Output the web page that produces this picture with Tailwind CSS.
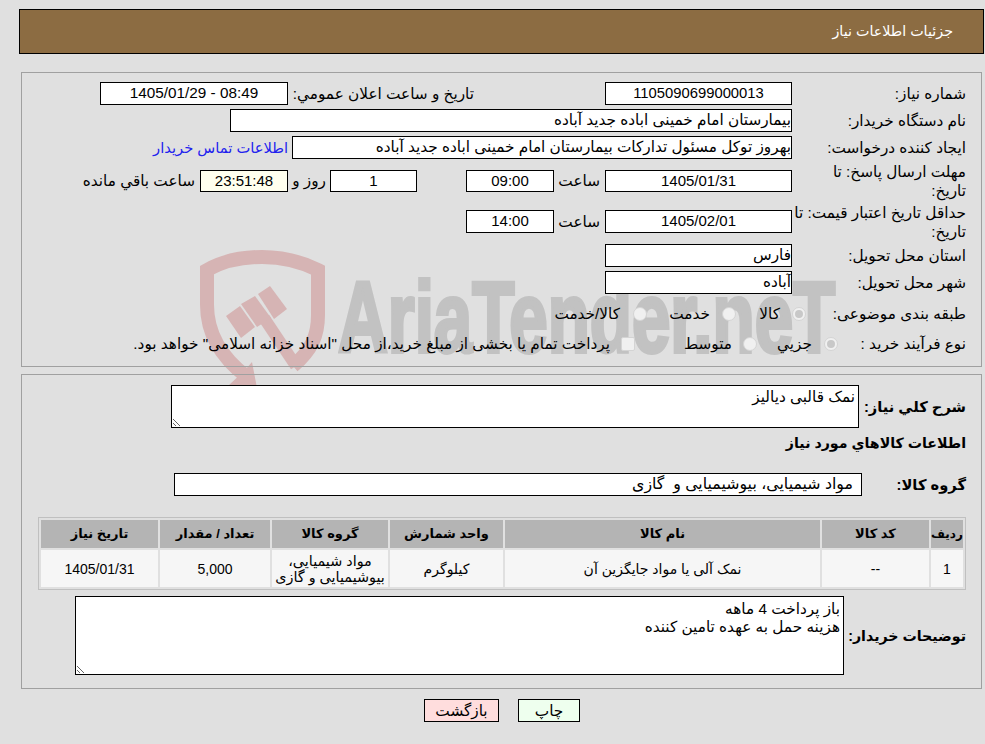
<!DOCTYPE html>
<html lang="fa" dir="rtl">
<head>
    <meta charset="UTF-8">
    <title>جزئیات اطلاعات نیاز</title>
    <script src="https://cdn.jsdelivr.net/npm/@tailwindcss/browser@4"></script>
</head>
<body class="bg-[#e0e0e0] text-black text-[15.3px] leading-[18px] [font-family:'Liberation_Sans','DejaVu_Sans',sans-serif]">
<div class="relative w-[985px] h-[744px] overflow-hidden">

    <!-- watermark -->
    <svg class="absolute left-[195px] top-[245px]" width="140" height="145" viewBox="195 245 140 145" fill="none">
        <g stroke="#d6b4b4" stroke-width="14">
            <path d="M293 366 C312 350 318 335 318 315 V270 C300 261 280 257 262 257 C243 257 223 261 207 270 V305 C207 335 222 358 247 377"/>
            <path d="M264 318 L296 366" stroke-width="12"/>
        </g>
        <g fill="#d6b4b4">
            <path d="M226 316 L240 306 L255 327 L241 338Z"/>
            <path d="M241 304 L255 296 L271 318 L257 327Z"/>
            <path d="M258 294 L270 286 L287 309 L274 319Z"/>
            <path d="M245 370 L252 362 L257 388 L228 386Z"/>
        </g>
    </svg>
    <div dir="ltr" class="absolute left-[338px] top-[267px] h-[100px] origin-top-left scale-x-[0.69] text-[100px] leading-[100px] font-bold text-[#c2c2c2] [-webkit-text-stroke:4px_#c2c2c2] whitespace-nowrap">AriaTender.neT</div>

    <div class="relative pt-[9px] pr-[1px]">
        <div class="h-[45px] w-[965px] flex items-center bg-[#8c6c42] border border-black pr-[30px] text-white text-[14.3px] pb-[2px]">جزئیات اطلاعات نیاز</div>
    </div>

    <!-- request details -->
    <div class="relative mt-[18px] mr-[3px] h-[295px] w-[961px] border border-[#a0a0a0] pt-[9px] pr-[15px]">
        <div class="flex items-center h-[23px]">
            <div class="w-[174px]">شماره نیاز:</div>
            <div class="w-[187px] h-[23px] border border-black bg-white text-center text-[14.8px] leading-[20px]">1105090699000013</div>
            <div class="mr-[131px] w-[186px]">تاریخ و ساعت اعلان عمومي:</div>
            <div dir="ltr" class="w-[188px] h-[23px] border border-black bg-white text-center text-[15.3px] leading-[20px]">1405/01/29 - 08:49</div>
        </div>
        <div class="flex items-center h-[23px] mt-[4px]">
            <div class="w-[174px]">نام دستگاه خریدار:</div>
            <div class="w-[562px] h-[23px] border border-black bg-white leading-[20px]">بیمارستان امام خمینی اباده جدید آباده</div>
        </div>
        <div class="flex items-center h-[23px] mt-[4px]">
            <div class="w-[174px]">ایجاد کننده درخواست:</div>
            <div class="w-[500px] h-[23px] border border-black bg-white leading-[20px]">بهروز توکل مسئول تدارکات بیمارستان امام خمینی اباده جدید آباده</div>
            <a class="mr-[4px] text-[#2222ee] text-[14.7px]">اطلاعات تماس خریدار</a>
        </div>
        <div class="flex items-center h-[22px] mt-[11px]">
            <div class="w-[174px] leading-[19px]">مهلت ارسال پاسخ: تا<br>تاریخ:</div>
            <div class="w-[187px] h-[22px] border border-black bg-white text-center text-[15px] leading-[20px]">1405/01/31</div>
            <div class="mr-[5px] w-[46px]">ساعت</div>
            <div class="w-[88px] h-[22px] border border-black bg-white text-center text-[15px] leading-[20px]">09:00</div>
            <div class="w-[49px]"></div>
            <div class="w-[87px] h-[22px] border border-black bg-white text-center text-[15px] leading-[20px]">1</div>
            <div class="w-[42px] pr-[4px]">روز و</div>
            <div class="w-[88px] h-[22px] border border-black bg-[#ffffee] text-center text-[15px] leading-[20px]">23:51:48</div>
            <div class="mr-[5px]">ساعت باقي مانده</div>
        </div>
        <div class="flex items-center h-[23px] mt-[18px]">
            <div class="w-[174px] leading-[19px]">حداقل تاریخ اعتبار قیمت: تا<br>تاریخ:</div>
            <div class="w-[187px] h-[23px] border border-black bg-white text-center text-[15px] leading-[20px]">1405/02/01</div>
            <div class="mr-[5px] w-[46px]">ساعت</div>
            <div class="w-[88px] h-[23px] border border-black bg-white text-center text-[15px] leading-[20px]">14:00</div>
        </div>
        <div class="flex items-center h-[23px] mt-[11px]">
            <div class="w-[174px]">استان محل تحویل:</div>
            <div class="w-[187px] h-[23px] border border-black bg-white leading-[20px]">فارس</div>
        </div>
        <div class="flex items-center h-[23px] mt-[4px]">
            <div class="w-[174px]">شهر محل تحویل:</div>
            <div class="w-[187px] h-[23px] border border-black bg-white leading-[20px]">آباده</div>
        </div>
        <div class="flex items-center h-[22px] mt-[9px]">
            <div class="w-[160px]">طبقه بندی موضوعی:</div>
            <span class="w-[14px] h-[14px] rounded-full border border-[#d4d4d4] bg-[#f0f0f0] flex items-center justify-center"><span class="w-[8px] h-[8px] rounded-full bg-[#c8c8c8]"></span></span>
            <div class="w-[56px] pr-[12px]">کالا</div>
            <span class="w-[14px] h-[14px] rounded-full border border-[#d4d4d4] bg-[#f0f0f0]"></span>
            <div class="w-[75px] pr-[12px]">خدمت</div>
            <span class="w-[14px] h-[14px] rounded-full border border-[#d4d4d4] bg-[#f0f0f0]"></span>
            <div class="pr-[13px]">کالا/خدمت</div>
        </div>
        <div class="flex items-center h-[22px] mt-[8px]">
            <div class="w-[128px]">نوع فرآیند خرید :</div>
            <span class="w-[14px] h-[14px] rounded-full border border-[#d4d4d4] bg-[#f0f0f0] flex items-center justify-center"><span class="w-[8px] h-[8px] rounded-full bg-[#c8c8c8]"></span></span>
            <div class="w-[67px] pr-[12px]">جزیي</div>
            <span class="w-[14px] h-[14px] rounded-full border border-[#d4d4d4] bg-[#f0f0f0]"></span>
            <div class="w-[108px] pr-[11px]">متوسط</div>
            <span class="w-[14px] h-[14px] rounded-[2px] border border-[#d4d4d4] bg-[#f0f0f0]"></span>
            <div class="pr-[11px] whitespace-nowrap">پرداخت تمام یا بخشی از مبلغ خرید،از محل "اسناد خزانه اسلامی" خواهد بود.</div>
        </div>
    </div>

    <!-- goods -->
    <div class="relative mt-[7px] mr-[3px] h-[315px] w-[961px] border border-[#a0a0a0] pt-[10px] pr-[15px]">
        <div class="flex items-center h-[43px]">
            <div class="w-[107px] font-bold text-[14.7px]">شرح کلي نیاز:</div>
            <textarea readonly class="w-[688px] h-[43px] border border-black bg-white px-[3px] py-[2px] text-[15.3px] leading-[18px] outline-none">نمک قالبی دیالیز</textarea>
        </div>
        <div class="mt-[6px] h-[18px] font-bold text-[14.2px]">اطلاعات کالاهاي مورد نیاز</div>
        <div class="flex items-center h-[23px] mt-[21px]">
            <div class="w-[104px] font-bold text-[14.7px]">گروه کالا:</div>
            <div class="w-[688px] h-[23px] border border-black bg-white pr-[8px] text-[15.8px] leading-[20px] whitespace-pre">مواد شیمیایی، بیوشیمیایی و  گازی</div>
        </div>
        <table class="mt-[21px] w-[927px] border-separate border-spacing-[2px] border border-[#c0c0c0] bg-[#e0e0e0] text-center table-fixed text-[13px]">
            <thead>
                <tr class="h-[28px] bg-[#b4b4b4] font-bold">
                    <th class="w-[32px] p-0 text-[12px]">ردیف</th>
                    <th class="w-[107px] p-0">کد کالا</th>
                    <th class="w-[315px] p-0">نام کالا</th>
                    <th class="w-[113px] p-0">واحد شمارش</th>
                    <th class="w-[116px] p-0">گروه کالا</th>
                    <th class="w-[110px] p-0">تعداد / مقدار</th>
                    <th class="w-[117px] p-0">تاریخ نیاز</th>
                </tr>
            </thead>
            <tbody>
                <tr class="h-[37px] bg-[#f6f6f6] text-[14px]">
                    <td class="p-0">1</td>
                    <td class="p-0">--</td>
                    <td class="p-0">نمک آلی یا مواد جایگزین آن</td>
                    <td class="p-0">کیلوگرم</td>
                    <td class="p-0 leading-[16px] text-[14.4px]">مواد شیمیایی، بیوشیمیایی و گازی</td>
                    <td class="p-0">5,000</td>
                    <td class="p-0">1405/01/31</td>
                </tr>
            </tbody>
        </table>
        <div class="flex items-center h-[79px] mt-[6px]">
            <div class="w-[122px] font-bold text-[14.2px]">توضیحات خریدار:</div>
            <textarea readonly class="w-[769px] h-[79px] border border-black bg-white px-[3px] py-[3px] text-[15.3px] leading-[18px] outline-none">باز پرداخت 4 ماهه
هزینه حمل به عهده تامین کننده</textarea>
        </div>
    </div>

    <div class="relative flex justify-center gap-[19px] mt-[10px] pl-[19px]">
        <button class="w-[62px] h-[23px] border border-black bg-[#eeffee]">چاپ</button>
        <button class="w-[75px] h-[23px] border border-black bg-[#ffdddd]">بازگشت</button>
    </div>
</div>
</body>
</html>
